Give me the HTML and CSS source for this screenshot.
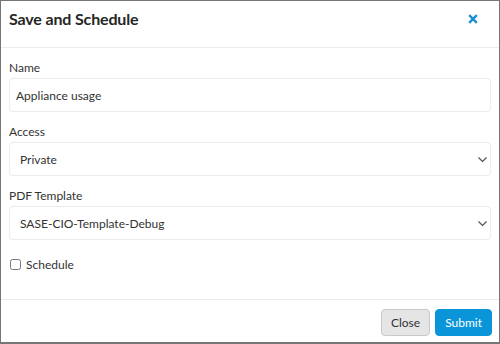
FILE: index.html
```html
<!DOCTYPE html>
<html lang="en">
<head>
    <meta charset="UTF-8">
    <title>Save and Schedule</title>
    <link rel="stylesheet" href="styles.css">
</head>
<body>
    <div class="modal">
        <div class="modal-header">
            <h2>Save and Schedule</h2>
            <button class="close-x" aria-label="Close">
                <svg width="10" height="10" viewBox="0 0 10 10">
                    <path d="M1.2 1.2 L8.8 8.8 M8.8 1.2 L1.2 8.8" stroke="#1a8fd6" stroke-width="2.4"/>
                </svg>
            </button>
        </div>

        <form class="modal-body">
            <div class="form-group">
                <label for="name">Name</label>
                <input type="text" id="name" value="Appliance usage">
            </div>

            <div class="form-group">
                <label for="access">Access</label>
                <div class="select-wrap">
                    <select id="access">
                        <option>Private</option>
                        <option>Public</option>
                    </select>
                    <svg class="chevron" width="9" height="5" viewBox="0 0 9 5">
                        <path d="M0.5 0.5 L4.5 4.5 L8.5 0.5" fill="none" stroke="#555" stroke-width="1.2"/>
                    </svg>
                </div>
            </div>

            <div class="form-group">
                <label for="template">PDF Template</label>
                <div class="select-wrap">
                    <select id="template">
                        <option>SASE-CIO-Template-Debug</option>
                    </select>
                    <svg class="chevron" width="9" height="5" viewBox="0 0 9 5">
                        <path d="M0.5 0.5 L4.5 4.5 L8.5 0.5" fill="none" stroke="#555" stroke-width="1.2"/>
                    </svg>
                </div>
            </div>

            <label class="check">
                <input type="checkbox">
                <span>Schedule</span>
            </label>
        </form>

        <div class="modal-footer">
            <button class="btn btn-default">Close</button>
            <button class="btn btn-primary">Submit</button>
        </div>
    </div>
</body>
</html>
```

FILE: styles.css
```css
* {
    margin: 0;
    padding: 0;
    box-sizing: border-box;
}

body {
    font-family: 'Lato', 'Liberation Sans', sans-serif;
    color: #333;
    background: white;
}

.modal {
    width: 500px;
    height: 344px;
    border: 1px solid #767676;
    border-bottom-width: 2px;
    display: flex;
    flex-direction: column;
}

.modal-header {
    height: 47px;
    border-bottom: 1px solid #ececec;
    display: flex;
    align-items: flex-start;
    justify-content: space-between;
    padding: 8px 21px 0 8px;
}

.modal-header h2 {
    font-size: 16px;
    line-height: 20px;
    font-weight: 700;
    letter-spacing: -0.15px;
    color: #262626;
}

.close-x {
    background: none;
    border: none;
    display: flex;
    margin-top: 5px;
    cursor: pointer;
}

.modal-body {
    flex: 1;
    padding: 11px 8px 0 8px;
}

.form-group {
    margin-bottom: 11px;
}

.form-group label {
    display: block;
    font-size: 12px;
    line-height: 17px;
    margin-bottom: 2px;
}

.form-group input,
.form-group select {
    width: 100%;
    height: 34px;
    border: 1px solid #ebebeb;
    border-radius: 4px;
    font-family: inherit;
    font-size: 12px;
    color: #333;
    background: white;
    padding: 0 6px;
    outline: none;
}

.form-group select {
    appearance: none;
    -webkit-appearance: none;
    padding: 0 10px;
}

.select-wrap {
    position: relative;
}

.chevron {
    position: absolute;
    right: 4px;
    top: 15px;
    pointer-events: none;
}

.check {
    display: flex;
    align-items: center;
    gap: 5px;
    font-size: 12px;
    line-height: 17px;
    margin-top: 16px;
}

.check input {
    width: 11px;
    height: 11px;
    margin-left: 1px;
}

.modal-footer {
    height: 43px;
    border-top: 1px solid #ececec;
    display: flex;
    justify-content: flex-end;
    align-items: flex-start;
    gap: 5px;
    padding: 9px 7px 0 0;
}

.btn {
    height: 27px;
    border-radius: 4px;
    font-family: inherit;
    font-size: 12px;
    padding: 0 9px;
    cursor: pointer;
}

.btn-default {
    background: #e5e5e5;
    border: 1px solid #c9c9c9;
    color: #333;
}

.btn-primary {
    background: #0b95d9;
    border: 1px solid #0b95d9;
    color: white;
}
```
